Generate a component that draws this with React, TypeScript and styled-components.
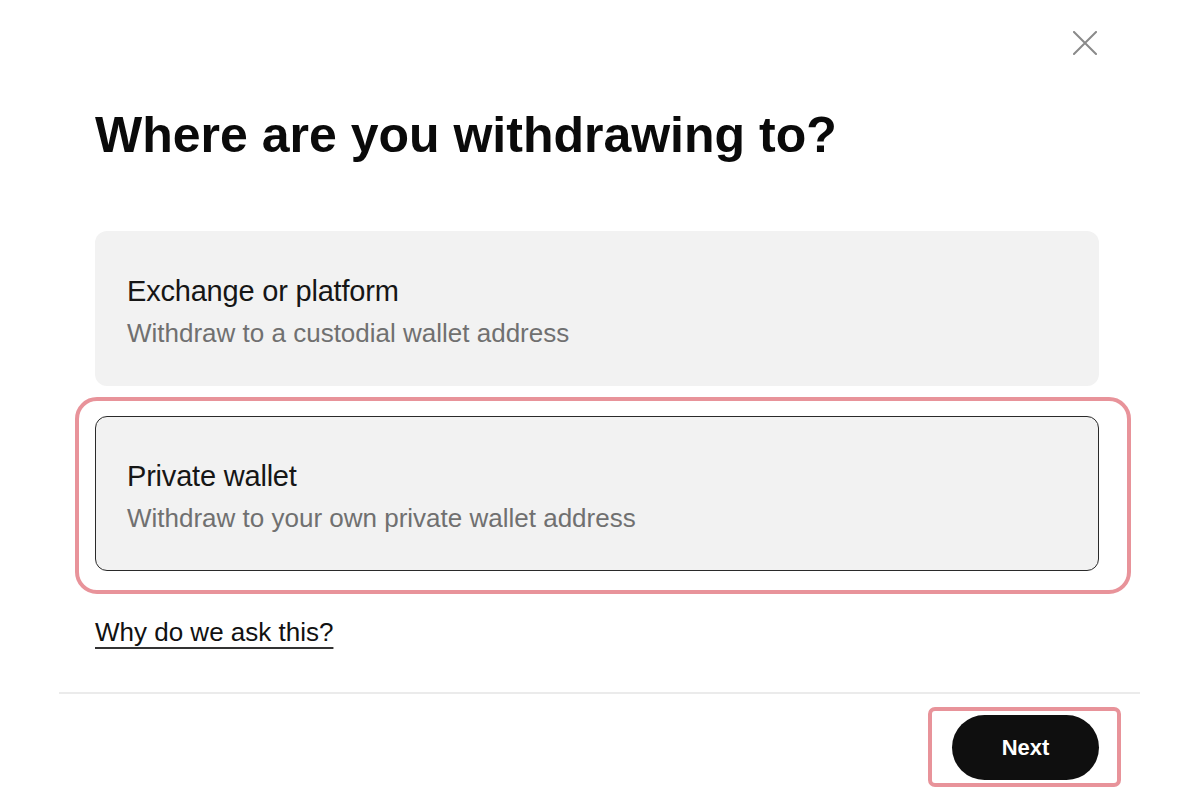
import React from "react";
import styled, { createGlobalStyle } from "styled-components";

const GlobalStyle = createGlobalStyle`
  html, body { margin: 0; padding: 0; background: #ffffff; }
  body { font-family: "Liberation Sans", Arial, Helvetica, sans-serif; color: #0a0a0a; }
  * { box-sizing: border-box; }
`;

const Modal = styled.div`
  width: 1081px;
  margin-left: 59px;
  min-height: 800px;
  display: flex;
  flex-direction: column;
`;

const Body = styled.div`
  padding: 31px 41px 0 36px;
  display: flex;
  flex-direction: column;
`;

const TopBar = styled.div`
  display: flex;
  justify-content: flex-end;
  height: 24px;
`;

const CloseButton = styled.button`
  width: 24px;
  height: 24px;
  padding: 0;
  margin-right: 2px;
  border: none;
  background: transparent;
  color: #8a8a8a;
  display: flex;
  align-items: center;
  justify-content: center;
  cursor: pointer;
`;

const Title = styled.h1`
  margin: 50px 0 0;
  font-size: 50px;
  line-height: 60px;
  font-weight: 700;
  color: #0a0a0a;
`;

const Options = styled.div`
  margin-top: 66px;
  display: flex;
  flex-direction: column;
  gap: 30px;
`;

const OptionCard = styled.div<{ $selected?: boolean }>`
  position: relative;
  background: #f2f2f2;
  border-radius: 12px;
  border: 1px solid ${(p) => (p.$selected ? "#2a2a2a" : "transparent")};
  padding: 41px 31px 36px;
  display: flex;
  flex-direction: column;
  gap: 8px;
  cursor: pointer;
`;

const Highlight = styled.div<{ $radius: number }>`
  position: absolute;
  border: 4px solid #e8939a;
  border-radius: ${(p) => p.$radius}px;
  pointer-events: none;
`;

const CardHighlight = styled(Highlight)`
  left: -21px;
  right: -33px;
  top: -20px;
  bottom: -24px;
`;

const ButtonHighlight = styled(Highlight)`
  left: -24px;
  right: -22px;
  top: -8px;
  bottom: -7px;
`;

const OptionTitle = styled.div`
  font-size: 29px;
  line-height: 36px;
  color: #161616;
  letter-spacing: -0.2px;
`;

const OptionText = styled.div`
  font-size: 26px;
  line-height: 32px;
  color: #707070;
`;

const HelpLink = styled.a`
  margin-top: 45px;
  align-self: flex-start;
  font-size: 26px;
  line-height: 32px;
  color: #111111;
  text-decoration: underline;
  text-decoration-thickness: 2px;
  text-underline-offset: 6px;
  text-decoration-color: #333333;
  cursor: pointer;
`;

const Divider = styled.hr`
  margin: 44px 0 0;
  border: none;
  height: 2px;
  background: #ebebeb;
`;

const Footer = styled.div`
  display: flex;
  justify-content: flex-end;
  padding: 21px 41px 0 0;
`;

const ButtonWrap = styled.div`
  position: relative;
`;

const NextButton = styled.button`
  width: 147px;
  height: 65px;
  border: none;
  border-radius: 33px;
  background: #0f0f0f;
  color: #ffffff;
  font-family: "Liberation Sans", Arial, sans-serif;
  font-size: 22px;
  font-weight: 700;
  cursor: pointer;
`;

const CloseIcon = () => (
  <svg width="24" height="24" viewBox="0 0 24 24" fill="none">
    <path d="M1 1L23 23M23 1L1 23" stroke="currentColor" strokeWidth="2" strokeLinecap="square" />
  </svg>
);

export default function App() {
  return (
    <>
      <GlobalStyle />
      <Modal>
        <Body>
          <TopBar>
            <CloseButton aria-label="Close">
              <CloseIcon />
            </CloseButton>
          </TopBar>
          <Title>Where are you withdrawing to?</Title>
          <Options>
            <OptionCard>
              <OptionTitle>Exchange or platform</OptionTitle>
              <OptionText>Withdraw to a custodial wallet address</OptionText>
            </OptionCard>
            <OptionCard $selected>
              <CardHighlight $radius={22} />
              <OptionTitle>Private wallet</OptionTitle>
              <OptionText>Withdraw to your own private wallet address</OptionText>
            </OptionCard>
          </Options>
          <HelpLink>Why do we ask this?</HelpLink>
        </Body>
        <Divider />
        <Footer>
          <ButtonWrap>
            <ButtonHighlight $radius={7} />
            <NextButton>Next</NextButton>
          </ButtonWrap>
        </Footer>
      </Modal>
    </>
  );
}
